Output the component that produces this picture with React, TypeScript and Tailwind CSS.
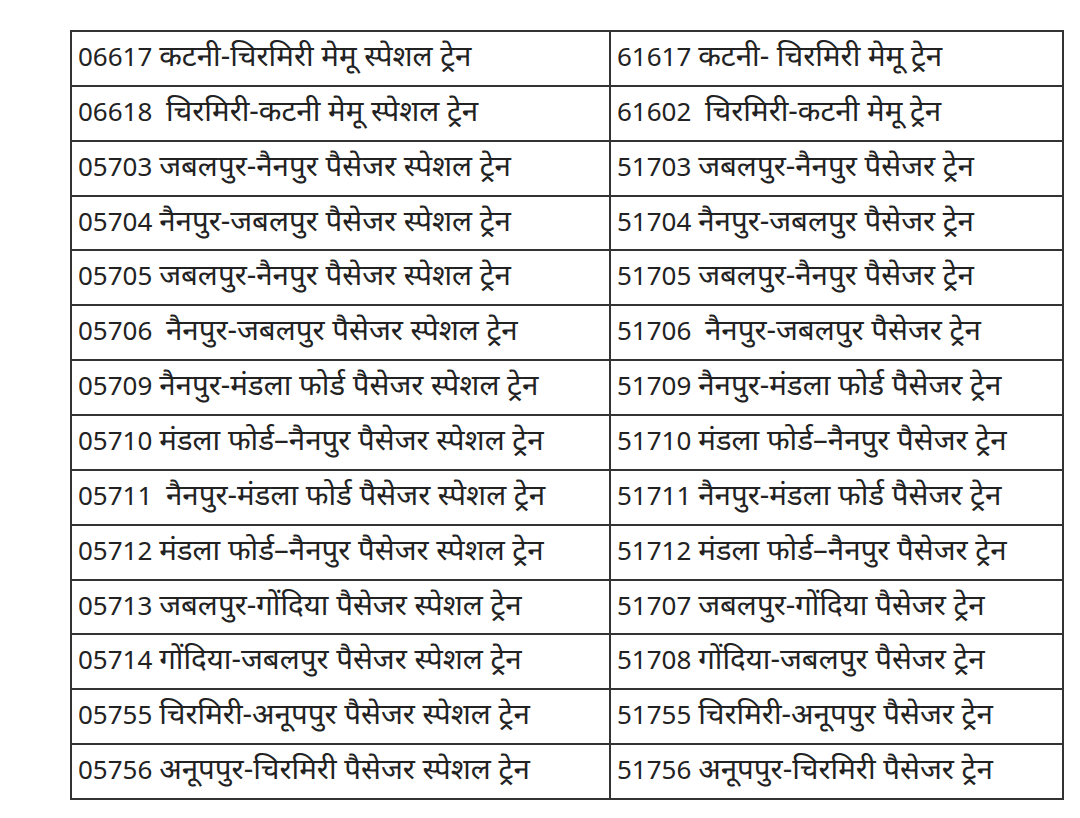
const rows: [string, string][] = [
  ["06617 कटनी-चिरमिरी मेमू स्पेशल ट्रेन", "61617 कटनी- चिरमिरी मेमू ट्रेन"],
  ["06618  चिरमिरी-कटनी मेमू स्पेशल ट्रेन", "61602  चिरमिरी-कटनी मेमू ट्रेन"],
  ["05703 जबलपुर-नैनपुर पैसेजर स्पेशल ट्रेन", "51703 जबलपुर-नैनपुर पैसेजर ट्रेन"],
  ["05704 नैनपुर-जबलपुर पैसेजर स्पेशल ट्रेन", "51704 नैनपुर-जबलपुर पैसेजर ट्रेन"],
  ["05705 जबलपुर-नैनपुर पैसेजर स्पेशल ट्रेन", "51705 जबलपुर-नैनपुर पैसेजर ट्रेन"],
  ["05706  नैनपुर-जबलपुर पैसेजर स्पेशल ट्रेन", "51706  नैनपुर-जबलपुर पैसेजर ट्रेन"],
  ["05709 नैनपुर-मंडला फोर्ड पैसेजर स्पेशल ट्रेन", "51709 नैनपुर-मंडला फोर्ड पैसेजर ट्रेन"],
  ["05710 मंडला फोर्ड–नैनपुर पैसेजर स्पेशल ट्रेन", "51710 मंडला फोर्ड–नैनपुर पैसेजर ट्रेन"],
  ["05711  नैनपुर-मंडला फोर्ड पैसेजर स्पेशल ट्रेन", "51711 नैनपुर-मंडला फोर्ड पैसेजर ट्रेन"],
  ["05712 मंडला फोर्ड–नैनपुर पैसेजर स्पेशल ट्रेन", "51712 मंडला फोर्ड–नैनपुर पैसेजर ट्रेन"],
  ["05713 जबलपुर-गोंदिया पैसेजर स्पेशल ट्रेन", "51707 जबलपुर-गोंदिया पैसेजर ट्रेन"],
  ["05714 गोंदिया-जबलपुर पैसेजर स्पेशल ट्रेन", "51708 गोंदिया-जबलपुर पैसेजर ट्रेन"],
  ["05755 चिरमिरी-अनूपपुर पैसेजर स्पेशल ट्रेन", "51755 चिरमिरी-अनूपपुर पैसेजर ट्रेन"],
  ["05756 अनूपपुर-चिरमिरी पैसेजर स्पेशल ट्रेन", "51756 अनूपपुर-चिरमिरी पैसेजर ट्रेन"],
];

// number and name are set at slightly different sizes to match the scan
function Cell({ text }: { text: string }) {
  const m = text.match(/^(\d+)(\s+)(.*)$/);
  const num = m ? m[1] : "";
  const gap = m ? m[2] : "";
  const name = m ? m[3] : text;
  return (
    <td className="whitespace-pre border-2 border-[#333] px-[6px] pt-[5px] align-top leading-[36px]">
      <span className="text-[26px]">{num}</span>
      <span className="text-[26px]">{gap}</span>
      <span className="text-[29.5px]">{name}</span>
    </td>
  );
}

export default function App() {
  return (
    <div className="min-h-[818px] w-[1080px] bg-white pl-[70px] pt-[30px] font-['Noto_Sans','Noto_Sans_Devanagari',sans-serif] text-[#222]">
      <table className="w-[992px] table-fixed border-collapse border-2 border-[#333]">
        <colgroup>
          <col className="w-[539px]" />
          <col className="w-[453px]" />
        </colgroup>
        <tbody>
          {rows.map(([a, b]) => (
            <tr key={a} className="h-[54.86px]">
              <Cell text={a} />
              <Cell text={b} />
            </tr>
          ))}
        </tbody>
      </table>
    </div>
  );
}
